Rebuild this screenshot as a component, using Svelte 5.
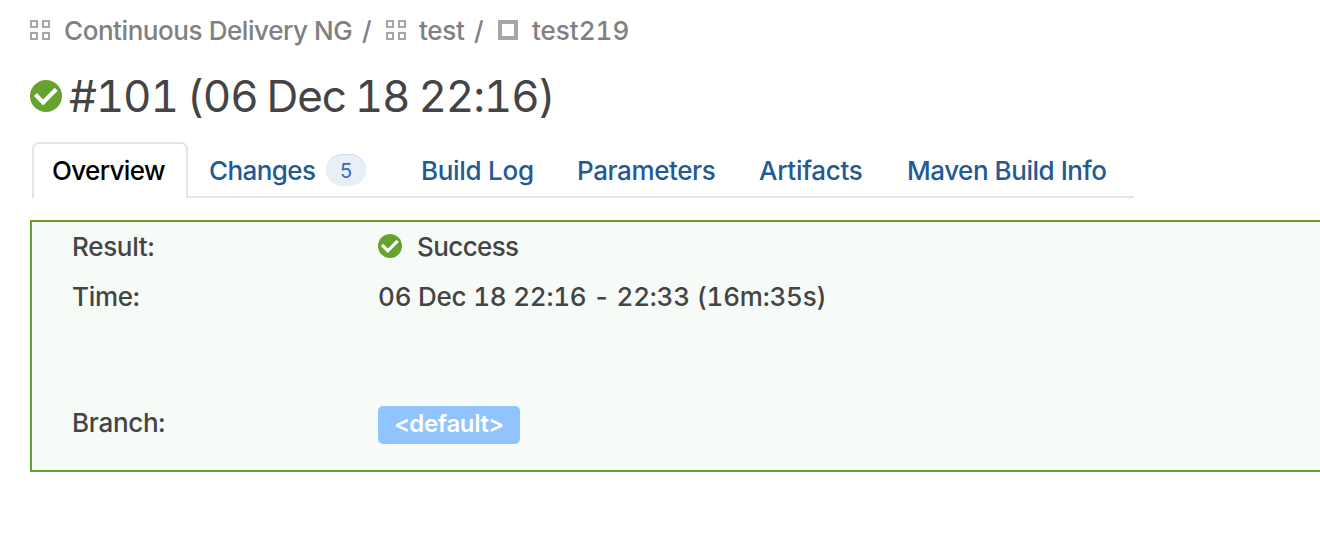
<script>
  const crumbs = [
    { label: 'Continuous Delivery NG', kind: 'project', slot: 'root' },
    { label: 'test', kind: 'project', slot: 'sub' },
    { label: 'test219', kind: 'build', slot: 'config' }
  ];
  const tabs = [
    { label: 'Overview', slot: 'active' },
    { label: 'Changes', slot: 'changes', count: 5 },
    { label: 'Build Log', slot: 'log' },
    { label: 'Parameters', slot: 'parameters' },
    { label: 'Artifacts', slot: 'artifacts' },
    { label: 'Maven Build Info', slot: 'maven' }
  ];
</script>

{#snippet check()}
  <svg class="check" viewBox="0 0 32 32" aria-hidden="true">
    <circle cx="16" cy="16" r="16" fill="#66a22f" />
    <path d="M5.4 14.6 13.1 22.4 26.2 9.2" fill="none" stroke="#fff" stroke-width="4.2" />
  </svg>
{/snippet}

<main>
  <nav class="crumbs">
    {#each crumbs as crumb, i}
      <span class="crumb {crumb.slot}">
        <svg class="kind" viewBox="0 0 20 20" aria-hidden="true">
          {#if crumb.kind === 'project'}
            <path d="M1 1h6v6H1zM13 1h6v6h-6zM1 13h6v6H1zM13 13h6v6h-6z" fill="none" stroke="#a6a6a6" stroke-width="2" />
          {:else}
            <path d="M2 2h16v16H2z" fill="none" stroke="#a6a6a6" stroke-width="4" />
          {/if}
        </svg>
        <span class="label">{crumb.label}</span>
      </span>
      {#if i < crumbs.length - 1}<span class="slash">/</span>{/if}
    {/each}
  </nav>

  <h1>{@render check()}<span>#101 (06 Dec 18 22:16)</span></h1>

  <div class="tabs">
    {#each tabs as tab}
      <div class="tab {tab.slot}"><span class="label">{tab.label}</span>{#if tab.count}<span class="count">{tab.count}</span>{/if}</div>
    {/each}
  </div>

  <section class="panel">
    <div class="row"><span>Result:</span><div class="status">{@render check()}<span class="success">Success</span></div></div>
    <div class="row"><span>Time:</span><span class="time">06 Dec 18 22:16 - 22:33 (16m:35s)</span></div>
    <div class="row branch"><span>Branch:</span><span class="tag">&lt;default&gt;</span></div>
  </section>
</main>

<style>
  :global(body) { background: #fff; }
  main {
    box-sizing: border-box;
    height: 536px;
    overflow: hidden;
    padding-left: 30px;
    font: 450 26px/32px Inter, sans-serif;
    font-variant-numeric: tabular-nums;
    color: #444;
    letter-spacing: -0.3px;
  }
  svg { display: block; flex: none; }
  .crumbs { display: flex; height: 32px; padding-top: 15px; color: #808080; white-space: nowrap; }
  .crumb { display: flex; align-items: center; gap: 14px; }
  .kind { width: 20px; height: 20px; margin-top: -2px; }
  .root { width: 332px; }
  .root .label { letter-spacing: -0.43px; }
  .slash { width: 24px; }
  .sub { width: 88px; }
  .sub .label { margin-left: -1px; }
  .config .label { letter-spacing: 0; }
  h1 { display: flex; align-items: center; height: 54px; gap: 7px; margin: 22px 0 0; font-size: 44px; line-height: 54px; font-weight: 400; white-space: nowrap; letter-spacing: -1.15px; word-spacing: -1.7px; }
  h1 .check { width: 32px; height: 32px; }
  .tabs { box-sizing: border-box; display: flex; width: 1102px; height: 56px; margin: 19px 0 0 2px; border-bottom: 2px solid #dfe5eb; color: #235a95; white-space: nowrap; }
  .tab { display: flex; align-items: center; box-sizing: border-box; height: 56px; padding-top: 2px; }
  .active { width: 156px; padding: 0 0 0 18px; background: #fff; border: 2px solid #dfe5eb; border-bottom: 0; border-radius: 7px 7px 0 0; color: #000; letter-spacing: -0.65px; }
  .changes { width: 233px; padding-left: 21px; letter-spacing: -0.6px; }
  .changes .label { width: 117px; }
  .log { width: 156px; }
  .parameters { width: 182px; letter-spacing: -0.4px; }
  .artifacts { width: 148px; }
  .maven { letter-spacing: -0.47px; }
  .count { box-sizing: border-box; width: 40px; height: 32px; margin-top: -2px; border-radius: 16px; background: #e7eff7; box-shadow: inset 0 1px #cfdeed; color: #3769bd; text-align: center; font-size: 20px; font-weight: 400; line-height: 34px; }
  .panel { box-sizing: border-box; height: 252px; margin-top: 22px; padding-left: 40px; border: 2px solid #66a22f; border-right: 0; background: #f6fbf8; }
  .row { display: grid; grid-template-columns: 306px 1fr; align-items: center; justify-items: start; height: 50px; white-space: nowrap; }
  .status { display: flex; align-items: center; gap: 15px; }
  .status .check { width: 24px; height: 24px; margin-top: -2px; }
  .success { letter-spacing: -0.6px; }
  .time { letter-spacing: -0.22px; }
  .branch { margin-top: 76px; }
  .tag { box-sizing: border-box; width: 142px; height: 38px; margin-top: 4px; background: #91c4fc; border-radius: 5px; color: #fff; font-weight: 600; font-size: 24px; line-height: 36px; text-align: center; }
</style>
